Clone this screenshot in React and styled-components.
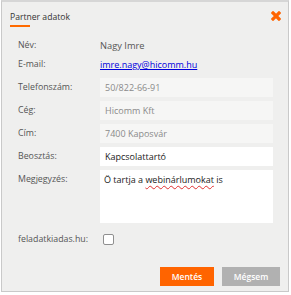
import React from "react";
import styled, { createGlobalStyle } from "styled-components";

const Global = createGlobalStyle`
  html, body { margin: 0; padding: 0; background: #ffffff; }
  body { font-family: "Open Sans", "Liberation Sans", sans-serif; }
  * { box-sizing: border-box; }
`;

const Dialog = styled.div`
  width: 288px;
  height: 292px;
  margin-left: 1px;
  background: #efefee;
  border: 1px solid #c9c9c9;
  border-top: 2px solid #d6d6d6;
  display: flex;
  flex-direction: column;
`;

const Header = styled.div`
  display: flex;
  justify-content: space-between;
  align-items: flex-start;
  padding: 9px 7px 0 8px;
  height: 36px;
`;

const Title = styled.div`
  font-size: 8.6px;
  color: #333;
  line-height: 11px;
  padding-top: 1px;
  &::after {
    content: "";
    display: block;
    width: 20px;
    height: 2px;
    margin-top: 2px;
    background: #ff6a00;
  }
`;

const Close = styled.button`
  border: 0;
  background: transparent;
  padding: 0;
  width: 10px;
  height: 10px;
  cursor: pointer;
  display: flex;
`;

const Form = styled.div`
  display: flex;
  flex-direction: column;
  gap: 4px;
  padding-left: 16px;
`;

const Row = styled.div`
  display: flex;
  align-items: ${(p) => (p.$top ? "flex-start" : "center")};
  min-height: ${(p) => p.$h || 19}px;
  margin-top: ${(p) => p.$mt || 0}px;
`;

const Label = styled.div`
  width: 82px;
  flex: none;
  font-size: 8.8px;
  color: #555;
  line-height: 15px;
  padding-top: ${(p) => (p.$top ? "2px" : "0")};
`;

const Value = styled.div`
  font-size: 9.3px;
  color: #555;
  line-height: 15px;
`;

const Link = styled.a`
  font-size: 9px;
  color: #0000dd;
  text-decoration: underline;
  line-height: 15px;
`;

const Field = styled.div`
  width: 173px;
  height: 19px;
  padding: 0 5px;
  display: flex;
  align-items: center;
  font-size: 9px;
  background: ${(p) => (p.$disabled ? "#f6f6f5" : "#ffffff")};
  color: ${(p) => (p.$disabled ? "#8a8a8a" : "#222")};
`;

const Note = styled.div`
  width: 173px;
  height: 53px;
  padding: 3px 4px;
  font-size: 9px;
  line-height: 14px;
  background: #ffffff;
  color: #222;
`;

const Misspelled = styled.span`
  text-decoration: underline wavy #e03030;
  text-decoration-thickness: 1px;
  text-underline-offset: 2px;
`;

const Check = styled.span`
  width: 11px;
  height: 11px;
  margin-left: 3px;
  border: 1px solid #8f8f8f;
  border-radius: 2px;
  background: #fff;
  display: block;
`;

const Footer = styled.div`
  display: flex;
  justify-content: flex-end;
  gap: 8px;
  padding-right: 8px;
  margin-top: 20px;
`;

const Button = styled.button`
  height: 19px;
  width: ${(p) => p.$w}px;
  border: 0;
  padding: 0;
  font-family: inherit;
  font-size: 8.5px;
  font-weight: 600;
  color: #fff;
  background: ${(p) => (p.$primary ? "#ff6400" : "#b1b1b1")};
  cursor: pointer;
`;

export default function App() {
  return (
    <>
      <Global />
      <Dialog>
        <Header>
          <Title>Partner adatok</Title>
          <Close aria-label="close">
            <svg width="10" height="10" viewBox="0 0 10 10">
              <path d="M2 2 L8 8 M8 2 L2 8" stroke="#ff6400" strokeWidth="3.2" strokeLinecap="square" />
            </svg>
          </Close>
        </Header>
        <Form>
          <Row $h={15}>
            <Label>Név:</Label>
            <Value>Nagy Imre</Value>
          </Row>
          <Row $h={15}>
            <Label>E-mail:</Label>
            <Link href="#">imre.nagy@hicomm.hu</Link>
          </Row>
          <Row $mt={2}>
            <Label>Telefonszám:</Label>
            <Field $disabled>50/822-66-91</Field>
          </Row>
          <Row>
            <Label>Cég:</Label>
            <Field $disabled>Hicomm Kft</Field>
          </Row>
          <Row>
            <Label>Cím:</Label>
            <Field $disabled>7400 Kaposvár</Field>
          </Row>
          <Row>
            <Label>Beosztás:</Label>
            <Field>Kapcsolattartó</Field>
          </Row>
          <Row $top $h={53}>
            <Label $top>Megjegyzés:</Label>
            <Note>
              Ö tartja a <Misspelled>webinárlumokat</Misspelled> is
            </Note>
          </Row>
          <Row $h={11} $mt={5}>
            <Label>feladatkiadas.hu:</Label>
            <Check />
          </Row>
        </Form>
        <Footer>
          <Button $primary $w={54}>Mentés</Button>
          <Button $w={58}>Mégsem</Button>
        </Footer>
      </Dialog>
    </>
  );
}
